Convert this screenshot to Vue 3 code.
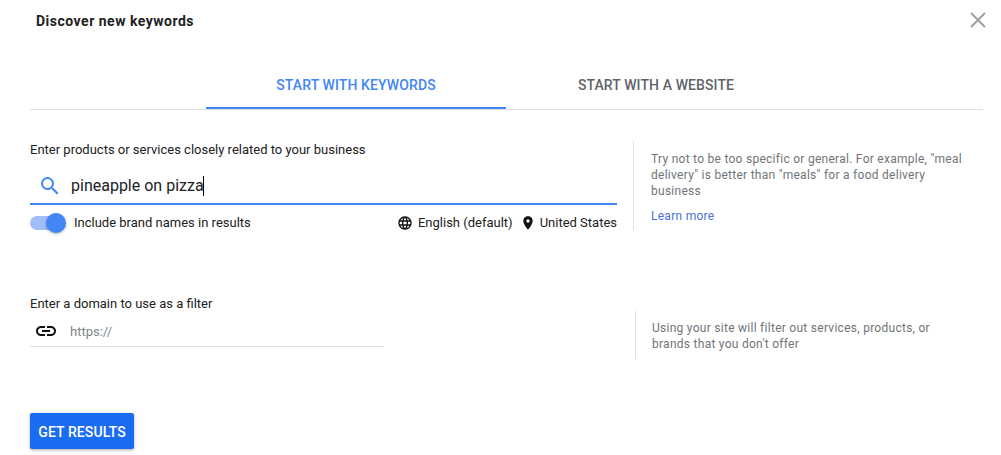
<script setup>
const title = 'Discover new keywords'
</script>

<template>
  <div class="page">
    <header class="head">
      <h1 class="title">{{ title }}</h1>
      <svg class="close" width="16" height="16" viewBox="0 0 16 16"><path d="M1 1L15 15M15 1L1 15" stroke="#9aa0a6" stroke-width="2" fill="none"/></svg>
    </header>
    <nav class="tabs">
      <div class="tab active">START WITH KEYWORDS</div>
      <div class="tab">START WITH A WEBSITE</div>
    </nav>
    <section class="row first">
      <div class="main">
        <div class="label">Enter products or services closely related to your business</div>
        <div class="search">
          <svg class="sicon" width="24" height="24" viewBox="0 0 24 24"><path fill="#4285f4" d="M15.5 14h-.79l-.28-.27A6.47 6.47 0 0 0 16 9.5 6.5 6.5 0 1 0 9.5 16c1.61 0 3.09-.59 4.23-1.57l.27.28v.79l5 4.99L20.49 19l-4.99-5zm-6 0C7.01 14 5 11.99 5 9.5S7.01 5 9.5 5 14 7.01 14 9.5 11.99 14 9.5 14z"/></svg>
          <span class="query">pineapple on pizza</span><span class="caret"></span>
        </div>
        <div class="opts">
          <div class="toggle"><span class="track"></span><span class="thumb"></span></div>
          <span class="brand">Include brand names in results</span>
          <div class="meta">
            <svg width="16" height="16" viewBox="0 0 24 24"><path fill="#111" d="M11.99 2C6.47 2 2 6.48 2 12s4.47 10 9.99 10C17.52 22 22 17.52 22 12S17.52 2 11.99 2zm6.93 6h-2.95a15.65 15.65 0 0 0-1.38-3.56A8.03 8.03 0 0 1 18.92 8zM12 4.04c.83 1.2 1.48 2.53 1.91 3.96h-3.82c.43-1.43 1.08-2.76 1.91-3.96zM4.26 14C4.1 13.36 4 12.69 4 12s.1-1.36.26-2h3.38c-.08.66-.14 1.32-.14 2s.06 1.34.14 2H4.26zm.82 2h2.95c.32 1.25.78 2.45 1.38 3.56A7.987 7.987 0 0 1 5.08 16zm2.95-8H5.08a7.987 7.987 0 0 1 4.33-3.56A15.65 15.65 0 0 0 8.03 8zM12 19.96c-.83-1.2-1.48-2.53-1.91-3.96h3.82c-.43 1.43-1.08 2.76-1.91 3.96zM14.34 14H9.66c-.09-.66-.16-1.32-.16-2s.07-1.35.16-2h4.68c.09.65.16 1.32.16 2s-.07 1.34-.16 2zm.25 5.56c.6-1.11 1.06-2.31 1.38-3.56h2.95a8.03 8.03 0 0 1-4.33 3.56zM16.36 14c.08-.66.14-1.32.14-2s-.06-1.34-.14-2h3.38c.16.64.26 1.31.26 2s-.1 1.36-.26 2h-3.38z"/></svg>
            <span class="lang">English (default)</span>
            <svg class="pin" width="16" height="16" viewBox="0 0 24 24"><path fill="#111" d="M12 2C8.13 2 5 5.13 5 9c0 5.25 7 13 7 13s7-7.75 7-13c0-3.87-3.13-7-7-7zm0 9.5a2.5 2.5 0 1 1 0-5 2.5 2.5 0 0 1 0 5z"/></svg>
            <span>United States</span>
          </div>
        </div>
      </div>
      <aside class="hint hint-one">
        <p>Try not to be too specific or general. For example, "meal delivery" is better than "meals" for a food delivery business</p>
        <a class="learn">Learn more</a>
      </aside>
    </section>
    <section class="row second">
      <div class="main">
        <div class="label">Enter a domain to use as a filter</div>
        <div class="domain">
          <svg width="24" height="24" viewBox="0 0 24 24"><path fill="#111" d="M3.9 12c0-1.71 1.39-3.1 3.1-3.1h4V7H7c-2.76 0-5 2.24-5 5s2.24 5 5 5h4v-1.9H7c-1.71 0-3.1-1.39-3.1-3.1zM8 13h8v-2H8v2zm9-6h-4v1.9h4c1.71 0 3.1 1.39 3.1 3.1s-1.39 3.1-3.1 3.1h-4V17h4c2.76 0 5-2.24 5-5s-2.24-5-5-5z"/></svg>
          <span class="placeholder">https://</span>
        </div>
      </div>
      <aside class="hint hint-two">
        <p>Using your site will filter out services, products, or brands that you don't offer</p>
      </aside>
    </section>
    <button class="cta">GET RESULTS</button>
  </div>
</template>

<style scoped>
.page {
  width: 1001px;
  height: 455px;
  box-sizing: border-box;
  padding: 0 18px 0 30px;
  background: #fff;
  font-family: Roboto, "Liberation Sans", sans-serif;
  color: #202124;
  overflow: hidden;
}
.head {
  display: flex;
  justify-content: space-between;
  align-items: center;
  height: 40px;
  padding-left: 6px;
}
.title {
  margin: 2px 0 0;
  font-size: 14px;
  font-weight: 700;
  line-height: 20px;
  letter-spacing: .5px;
  color: #212121;
}
.close { margin-right: -3px; }
.tabs {
  display: flex;
  margin-top: 20px;
  padding-left: 176px;
  height: 50px;
  border-bottom: 1px solid #e0e0e0;
  box-sizing: border-box;
}
.tab {
  width: 300px;
  text-align: center;
  font-size: 14px;
  font-weight: 500;
  letter-spacing: .1px;
  line-height: 51px;
  color: #5f6368;
  height: 47px;
}
.tab.active {
  color: #4285f4;
  border-bottom: 2px solid #4285f4;
}
.row { display: flex; }
.first { margin-top: 31px; height: 91px; }
.main { width: 587px; flex: none; }
.label {
  font-size: 13px;
  line-height: 16px;
  color: #212121;
  margin-top: 1px;
}
.search {
  display: flex;
  align-items: center;
  height: 35px;
  margin-top: 8px;
  padding: 2px 0 0 8px;
  border-bottom: 2px solid #4285f4;
}
.sicon { flex: none; }
.query {
  margin-left: 9px;
  font-size: 16px;
  color: #202124;
}
.caret {
  width: 1px;
  height: 20px;
  margin-left: -1px;
  background: #000;
}
.opts {
  display: flex;
  align-items: center;
  height: 31px;
  padding-top: 2px;
  font-size: 13px;
}
.toggle {
  position: relative;
  width: 36px;
  height: 20px;
  flex: none;
}
.track {
  position: absolute;
  left: 0;
  top: 3px;
  width: 34px;
  height: 14px;
  border-radius: 7px;
  background: #a1bef9;
}
.thumb {
  position: absolute;
  left: 16px;
  top: 0;
  width: 20px;
  height: 20px;
  border-radius: 50%;
  background: #4285f4;
  box-shadow: 0 1px 3px rgba(0,0,0,.3);
}
.brand { margin-left: 8px; color: #212121; }
.meta {
  margin-left: auto;
  display: flex;
  align-items: center;
  color: #212121;
}
.lang { margin-left: 5px; }
.pin { margin-left: 7px; margin-right: 4px; }
.hint {
  box-sizing: border-box;
  border-left: 1px solid #e0e0e0;
  font-size: 12px;
  line-height: 16px;
  letter-spacing: .27px;
  color: #70757a;
}
.hint p { margin: 0; }
.hint-one {
  margin-left: 16px;
  width: 335px;
  height: 89px;
  padding: 10px 0 0 17px;
}
.learn { display: block; margin-top: 9px; color: #4a6ee0; }
.second { margin-top: 64px; height: 56px; }
.second .main { width: 354px; }
.second .label { margin-top: 0; }
.domain {
  display: flex;
  align-items: center;
  height: 30px;
  padding: 4px 0 0 4px;
  border-bottom: 1px solid #e0e0e0;
  font-size: 13px;
}
.placeholder { margin-left: 12px; color: #80868b; }
.hint-two {
  margin: 15px 0 0 251px;
  width: 310px;
  height: 48px;
  padding: 9px 0 0 16px;
}
.cta {
  display: block;
  margin-top: 61px;
  width: 104px;
  height: 36px;
  padding: 1px 0 0;
  border: 0;
  border-radius: 2px;
  background: #1a6cf0;
  color: #fff;
  font-family: inherit;
  font-size: 14px;
  font-weight: 500;
  letter-spacing: .1px;
  box-shadow: 0 1px 3px rgba(0,0,0,.35);
}
</style>
